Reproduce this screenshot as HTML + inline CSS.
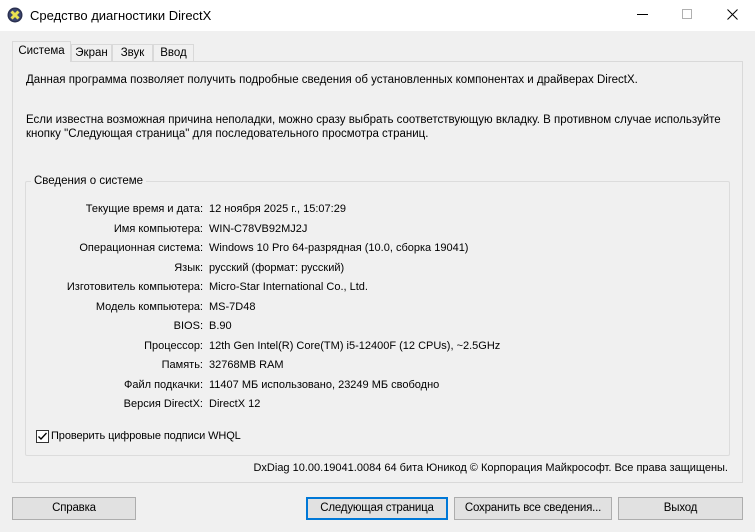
<!DOCTYPE html>
<html><head><meta charset="utf-8"><style>
*{margin:0;padding:0;box-sizing:border-box}
body{width:755px;height:532px;background:#f0f0f0;font-family:"Liberation Sans",sans-serif;font-size:11.5px;color:#000;position:relative;overflow:hidden}
.a{position:absolute;white-space:nowrap}
.title{left:0;top:0;width:755px;height:31px;background:#fff}
.tab{position:absolute;border:1px solid #d9d9d9;border-bottom:none;background:#f0f0f0;text-align:center;font-size:11.5px}
.panel{left:12px;top:61px;width:731px;height:422px;border:1px solid #d9d9d9;background:#f0f0f0}
.grp{left:25px;top:181px;width:705px;height:275px;border:1px solid #dcdcdc;border-radius:2px}
.lbl{position:absolute;right:552px;text-align:right}
.val{position:absolute;left:209px}
.btn{position:absolute;top:497px;height:23px;border:1px solid #adadad;background:#e1e1e1;text-align:center;line-height:21px;letter-spacing:-0.2px}
</style></head><body>
<div class="a title"></div>
<svg class="a" style="left:7px;top:7px" width="16" height="16"><circle cx="8" cy="8" r="7.5" fill="#2a3050"/><circle cx="8" cy="8" r="6" fill="#3c4670"/><path d="M4.5 4.5L11.5 11.5M11.5 4.5L4.5 11.5" stroke="#e8e050" stroke-width="3"/></svg>
<div class="a" style="left:30px;top:8px;font-size:13px">Средство диагностики DirectX</div>
<div class="a" style="left:637px;top:14px;width:11px;border-top:1px solid #000"></div>
<div class="a" style="left:682px;top:9px;width:10px;height:10px;border:1px solid #b0b0b0"></div>
<svg class="a" style="left:727px;top:9px" width="11" height="11"><path d="M0.5 0.5L10.5 10.5M10.5 0.5L0.5 10.5" stroke="#000" stroke-width="1"/></svg>
<div class="a panel"></div>
<div class="tab" style="left:12px;top:41px;width:59px;height:21px;line-height:19px;background:#f0f0f0">Система</div>
<div class="tab" style="left:71px;top:44px;width:41px;height:17px;line-height:16px;background:#f0f0f0">Экран</div>
<div class="tab" style="left:112px;top:44px;width:41px;height:17px;line-height:16px;background:#f0f0f0">Звук</div>
<div class="tab" style="left:153px;top:44px;width:41px;height:17px;line-height:16px;background:#f0f0f0">Ввод</div>
<div class="a" style="left:26px;top:74px">Данная программа позволяет получить подробные сведения об установленных компонентах и драйверах DirectX.</div>
<div class="a" style="left:26px;top:114px">Если известна возможная причина неполадки, можно сразу выбрать соответствующую вкладку. В противном случае используйте</div>
<div class="a" style="left:26px;top:128px">кнопку "Следующая страница" для последовательного просмотра страниц.</div>
<div class="a grp"></div>
<div class="a" style="left:31px;top:175px;padding:0 3px;background:#f0f0f0">Сведения о системе</div>
<div class="a" style="left:0;top:200px;width:755px;line-height:19.5px;font-size:11px">
<div class="lbl" style="top:0">Текущие время и дата:</div><div class="val" style="top:0">12 ноября 2025 г., 15:07:29</div>
<div class="lbl" style="top:19.5px">Имя компьютера:</div><div class="val" style="top:19.5px">WIN-C78VB92MJ2J</div>
<div class="lbl" style="top:39px">Операционная система:</div><div class="val" style="top:39px">Windows 10 Pro 64-разрядная (10.0, сборка 19041)</div>
<div class="lbl" style="top:58.5px">Язык:</div><div class="val" style="top:58.5px">русский (формат: русский)</div>
<div class="lbl" style="top:78px">Изготовитель компьютера:</div><div class="val" style="top:78px">Micro-Star International Co., Ltd.</div>
<div class="lbl" style="top:97.5px">Модель компьютера:</div><div class="val" style="top:97.5px">MS-7D48</div>
<div class="lbl" style="top:117px">BIOS:</div><div class="val" style="top:117px">B.90</div>
<div class="lbl" style="top:136.5px">Процессор:</div><div class="val" style="top:136.5px">12th Gen Intel(R) Core(TM) i5-12400F (12 CPUs), ~2.5GHz</div>
<div class="lbl" style="top:156px">Память:</div><div class="val" style="top:156px">32768MB RAM</div>
<div class="lbl" style="top:175.5px">Файл подкачки:</div><div class="val" style="top:175.5px">11407 МБ использовано, 23249 МБ свободно</div>
<div class="lbl" style="top:195px">Версия DirectX:</div><div class="val" style="top:195px">DirectX 12</div>
</div>
<svg class="a" style="left:36px;top:430px" width="13" height="13"><rect x="0.5" y="0.5" width="12" height="12" fill="#fff" stroke="#333"/><path d="M2.5 6.5L5 9L10.5 3" stroke="#000" stroke-width="1.3" fill="none"/></svg>
<div class="a" style="left:51px;top:430px;font-size:11px;letter-spacing:-0.1px">Проверить цифровые подписи WHQL</div>
<div class="a" style="right:27px;top:462px;font-size:11px;letter-spacing:0">DxDiag 10.00.19041.0084 64 бита Юникод © Корпорация Майкрософт. Все права защищены.</div>
<div class="btn" style="left:12px;width:124px">Справка</div>
<div class="btn" style="left:306px;width:142px;border:2px solid #0078d7;line-height:19px">Следующая страница</div>
<div class="btn" style="left:454px;width:158px">Сохранить все сведения...</div>
<div class="btn" style="left:618px;width:125px">Выход</div>
</body></html>
